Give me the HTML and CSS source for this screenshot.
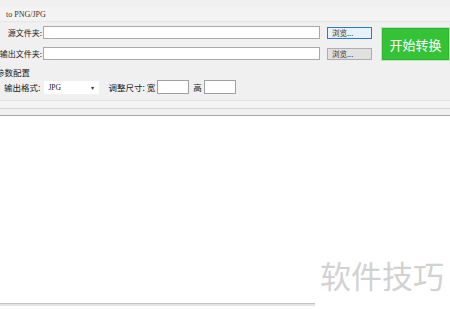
FILE: index.html
```html
<!DOCTYPE html>
<html>
<head>
<meta charset="utf-8">
<link rel="stylesheet" href="styles.css">
</head>
<body>
<div class="app">
  <div class="panel">
    <div class="top-frag"></div>
    <div class="title">to PNG/JPG</div>
    <div class="io-grid">
      <div class="label">源文件夹:</div>
      <div class="field"></div>
      <div class="browse focused">浏览...</div>
      <div class="start">开始转换</div>
      <div class="label">输出文件夹:</div>
      <div class="field"></div>
      <div class="browse">浏览...</div>
    </div>
    <div class="section">参数配置</div>
    <div class="param-row">
      <span class="plabel">输出格式:</span>
      <div class="combo"><span>JPG</span><span class="arrow">▾</span></div>
      <span class="plabel size">调整尺寸: 宽</span>
      <div class="num"></div>
      <span class="plabel">高</span>
      <div class="num"></div>
    </div>
    <div class="sep1"></div>
    <div class="sep2"></div>
  </div>
  <div class="content"></div>
  <div class="bottom-line"></div>
  <div class="watermark">软件技巧</div>
</div>
</body>
</html>
```

FILE: styles.css
```css
html, body {
  margin: 0;
  padding: 0;
}
body {
  width: 450px;
  height: 309px;
  overflow: hidden;
  background: #ffffff;
  font-family: "Noto Sans CJK SC", "Liberation Sans", sans-serif;
  font-size: 8.5px;
  color: #1a1a1a;
}
.app {
  position: relative;
  width: 450px;
  height: 309px;
  display: flex;
  flex-direction: column;
}
.panel {
  background: #f0f0f0;
  display: flex;
  flex-direction: column;
}
.top-frag {
  height: 7px;
}
.title {
  height: 14px;
  line-height: 16px;
  padding-left: 6px;
  font-family: "Liberation Serif", "Noto Sans CJK SC", serif;
  font-size: 8px;
  color: #333;
  border-bottom: 1px solid #e6e6e6;
  background: #f3f3f3;
}
.io-grid {
  display: grid;
  grid-template-columns: 46px 277px 52px 78px;
  grid-template-rows: 13px 13px;
  column-gap: 0;
  row-gap: 8px;
  margin-left: -3px;
  margin-top: 4px;
  align-items: center;
}
.label {
  text-align: right;
  white-space: nowrap;
  line-height: 13px;
  font-size: 8px;
  padding-right: 1px;
}
.field {
  height: 11px;
  background: #fff;
  border: 1px solid #a9a9a9;
}
.browse {
  height: 10px;
  margin-left: 7px;
  width: 39px;
  box-sizing: content-box;
  background: #e1e1e1;
  border: 1px solid #adadad;
  font-size: 7.5px;
  line-height: 10px;
  padding-left: 4px;
  color: #333;
}
.browse.focused {
  border-color: #2e7bbf;
  background: #e5f1fb;
}
.start {
  grid-row: 1 / 3;
  grid-column: 4;
  align-self: stretch;
  margin: 1px 0 -1px 9px;
  background: #36c236;
  border: 1px solid #b6e8b6;
  box-shadow: inset 0 0 0 1px #2fb52f;
  color: #ffffff;
  font-size: 13px;
  display: flex;
  align-items: center;
  justify-content: center;
}
.section {
  margin-left: -4px;
  margin-top: 6px;
  height: 12px;
  line-height: 12px;
}
.param-row {
  display: flex;
  align-items: center;
  margin-top: 2px;
  margin-left: 4px;
  height: 14px;
}
.plabel {
  white-space: nowrap;
  line-height: 14px;
}
.combo {
  width: 55px;
  height: 13px;
  margin-left: 4px;
  background: #ffffff;
  display: flex;
  align-items: center;
  justify-content: space-between;
  padding: 0 5px 0 4px;
  box-sizing: border-box;
  font-family: "Liberation Serif", serif;
  font-size: 7.5px;
}
.combo .arrow {
  font-size: 6px;
  color: #333;
}
.size {
  margin-left: 9px;
}
.num {
  width: 30px;
  height: 12px;
  background: #fff;
  border: 1px solid #a0a0a0;
  margin: 0 4px 0 2px;
}
.sep1 {
  margin-top: 6px;
  height: 7px;
  border-top: 1px solid #e2e2e2;
  border-bottom: 1px solid #d6d6d6;
  background: #f4f4f4;
}
.sep2 {
  height: 6px;
  border-bottom: 1px solid #a8a8a8;
  background: #f0f0f0;
}
.content {
  flex: 1;
  background: #ffffff;
}
.bottom-line {
  width: 315px;
  height: 2px;
  border-top: 1px solid #c4c4c4;
  background: #e4e4e4;
  margin-bottom: 3px;
}
.watermark {
  position: absolute;
  left: 320px;
  top: 255px;
  font-size: 31px;
  line-height: 40px;
  color: #d2d2d2;
  white-space: nowrap;
}
```
